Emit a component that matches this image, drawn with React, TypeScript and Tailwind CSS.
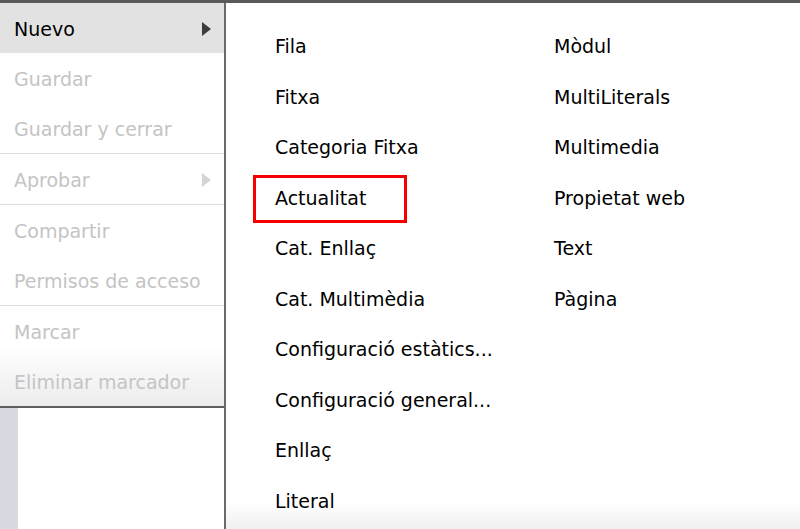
import React from "react";

const font = { fontFamily: '"DejaVu Sans", Verdana, sans-serif' };

type MenuItem = { label: string; active?: boolean; submenu?: boolean; divider?: boolean };

const menu: MenuItem[] = [
  { label: "Nuevo", active: true, submenu: true },
  { label: "Guardar" },
  { label: "Guardar y cerrar", divider: true },
  { label: "Aprobar", submenu: true, divider: true },
  { label: "Compartir" },
  { label: "Permisos de acceso", divider: true },
  { label: "Marcar" },
  { label: "Eliminar marcador" },
];

const colA = [
  "Fila",
  "Fitxa",
  "Categoria Fitxa",
  "Actualitat",
  "Cat. Enllaç",
  "Cat. Multimèdia",
  "Configuració estàtics...",
  "Configuració general...",
  "Enllaç",
  "Literal",
];

const colB = ["Mòdul", "MultiLiterals", "Multimedia", "Propietat web", "Text", "Pàgina"];

const Arrow = ({ dim }: { dim?: boolean }) => (
  <svg width="9" height="14" viewBox="0 0 9 14" className={dim ? "text-[#d4d4d4]" : "text-[#3d3d3d]"}>
    <path d="M0 0 L9 7 L0 14 Z" fill="currentColor" />
  </svg>
);

export default function App() {
  return (
    <div className="w-[800px] h-[529px] overflow-hidden flex flex-col bg-white" style={font}>
      <div className="h-[3px] bg-[#5a5a5a]" />
      <div className="flex flex-1 min-h-0">
        {/* left context menu */}
        <div className="w-[224px] flex flex-col">
          <div className="bg-gradient-to-b from-white via-white via-85% to-[#ececec]">
            {menu.map((m) => (
              <React.Fragment key={m.label}>
                <div
                  className={`h-[50px] flex items-center justify-between pl-[14px] pr-[13px] pt-[2px] text-[19px] ${
                    m.active ? "bg-[#e2e2e2] text-black" : "text-[#c4c4c4]"
                  }`}
                >
                  <span>{m.label}</span>
                  {m.submenu && <Arrow dim={!m.active} />}
                </div>
                {m.divider && <div className="h-px bg-[#dedede]" />}
              </React.Fragment>
            ))}
          </div>
          <div className="h-[2px] bg-[#5e5e5e]" />
          <div className="flex flex-1">
            <div className="w-[18px] bg-[#d7dae1]" />
            <div className="flex-1 bg-white" />
          </div>
        </div>

        {/* submenu panel */}
        <div className="flex-1 border-l-2 border-[#6a6a6a] bg-gradient-to-b from-white via-white via-95% to-[#efefef] pl-[49px] pt-[18px] flex text-[19px] text-black">
          <div className="w-[279px] flex flex-col">
            {colA.map((t) => (
              <div key={t} className="h-[50.5px] flex items-center">
                <span className="relative">
                  {t}
                  {t === "Actualitat" && (
                    <span className="absolute left-[-22px] top-[-9px] w-[154px] h-[48px] border-[3px] border-[#f40000]" />
                  )}
                </span>
              </div>
            ))}
          </div>
          <div className="flex flex-col">
            {colB.map((t) => (
              <div key={t} className="h-[50.5px] flex items-center">
                {t}
              </div>
            ))}
          </div>
        </div>
      </div>
    </div>
  );
}
